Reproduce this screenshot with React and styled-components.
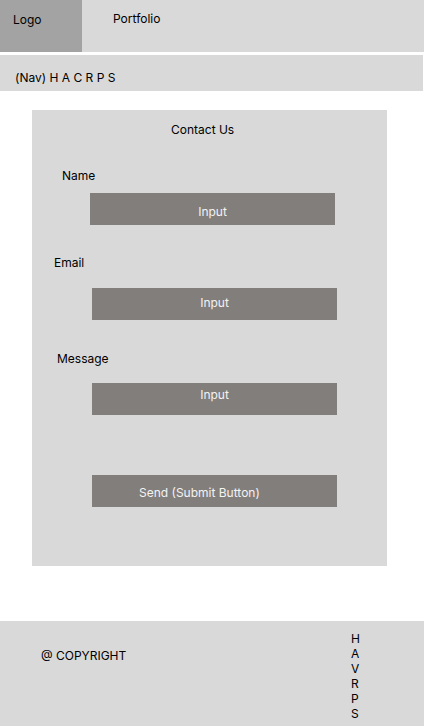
import React from "react";
import styled, { createGlobalStyle } from "styled-components";

const Global = createGlobalStyle`
  html, body { margin: 0; padding: 0; background: #ffffff; }
  body { font-family: Inter, "Noto Sans", sans-serif; font-size: 12px; line-height: 15px; color: #000; }
  * { box-sizing: border-box; }
`;

const Page = styled.div`
  width: 424px;
  display: flex;
  flex-direction: column;
`;

const Header = styled.header`
  height: 52px;
  background: #d9d9d9;
  display: flex;
  align-items: flex-start;
`;

const LogoBox = styled.div`
  width: 82px;
  height: 100%;
  background: #a3a3a3;
  padding: 12px 0 0 13px;
`;

const HeaderLink = styled.div`
  padding: 11px 0 0 31px;
`;

const Nav = styled.nav`
  margin-top: 3px;
  width: 423px;
  height: 36px;
  background: #d9d9d9;
  padding: 15px 0 0 15px;
`;

const Card = styled.section`
  margin: 19px 0 0 32px;
  width: 355px;
  height: 456px;
  background: #d9d9d9;
  padding-top: 11.5px;
  display: flex;
  flex-direction: column;
  align-items: flex-start;
`;

const Title = styled.h2`
  margin: 0 0 0 139px;
  font-size: 12px;
  font-weight: 400;
  line-height: 15px;
`;

const Label = styled.label`
  display: block;
  margin-top: ${(p) => p.$top}px;
  margin-left: ${(p) => p.$left}px;
`;

const InputBox = styled.div`
  margin-top: ${(p) => p.$top}px;
  margin-left: ${(p) => p.$left}px;
  width: 245px;
  height: 32px;
  background: #827e7c;
  color: #f3f3f3;
  text-align: center;
  padding-top: ${(p) => p.$pad}px;
`;

const SubmitButton = styled.button`
  margin-top: 60px;
  margin-left: 60px;
  width: 245px;
  height: 32px;
  border: none;
  background: #827e7c;
  color: #f3f3f3;
  font: inherit;
  text-align: left;
  padding: 3px 0 0 47px;
`;

const Footer = styled.footer`
  margin-top: 55px;
  height: 105px;
  background: #d9d9d9;
  display: flex;
  align-items: flex-start;
`;

const Copyright = styled.div`
  padding: 26.5px 0 0 41px;
  width: 351px;
`;

const FooterLinks = styled.div`
  padding-top: 10px;
  display: flex;
  flex-direction: column;
`;

const fields = [
  { label: "Name", labelTop: 31, labelLeft: 30, inputTop: 10.5, inputLeft: 58, pad: 10.5 },
  { label: "Email", labelTop: 29.5, labelLeft: 22, inputTop: 18.5, inputLeft: 60, pad: 6.5 },
  { label: "Message", labelTop: 30.5, labelLeft: 25, inputTop: 17.5, inputLeft: 60, pad: 4 },
];

export default function App() {
  return (
    <Page>
      <Global />
      <Header>
        <LogoBox>Logo</LogoBox>
        <HeaderLink>Portfolio</HeaderLink>
      </Header>
      <Nav>(Nav) H A C R P S</Nav>
      <Card>
        <Title>Contact Us</Title>
        {fields.map((f) => (
          <React.Fragment key={f.label}>
            <Label $top={f.labelTop} $left={f.labelLeft}>{f.label}</Label>
            <InputBox $top={f.inputTop} $left={f.inputLeft} $pad={f.pad}>Input</InputBox>
          </React.Fragment>
        ))}
        <SubmitButton>Send (Submit Button)</SubmitButton>
      </Card>
      <Footer>
        <Copyright>@ COPYRIGHT</Copyright>
        <FooterLinks>
          {["H", "A", "V", "R", "P", "S"].map((l, i) => (
            <span key={i}>{l}</span>
          ))}
        </FooterLinks>
      </Footer>
    </Page>
  );
}
